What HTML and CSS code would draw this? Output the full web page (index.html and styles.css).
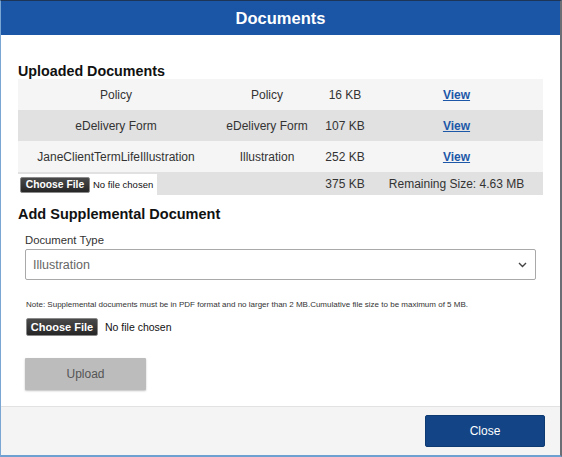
FILE: index.html
```html
<!DOCTYPE html>
<html>
<head>
<meta charset="utf-8">
<link rel="stylesheet" href="styles.css">
</head>
<body>
<div class="modal">
  <div class="modal-header">Documents</div>
  <div class="modal-body">
    <h2 class="section-title">Uploaded Documents</h2>
    <table class="docs">
      <colgroup>
        <col class="c1"><col class="c2"><col class="c3"><col class="c4">
      </colgroup>
      <tr class="odd"><td>Policy</td><td>Policy</td><td>16 KB</td><td><a class="view" href="#">View</a></td></tr>
      <tr class="even"><td>eDelivery Form</td><td>eDelivery Form</td><td>107 KB</td><td><a class="view" href="#">View</a></td></tr>
      <tr class="odd"><td>JaneClientTermLifeIllustration</td><td>Illustration</td><td>252 KB</td><td><a class="view" href="#">View</a></td></tr>
      <tr class="even total"><td class="file-cell"><div class="file-box small"><span class="file-btn">Choose File</span><span class="file-name">No file chosen</span></div></td><td></td><td>375 KB</td><td>Remaining Size: 4.63 MB</td></tr>
    </table>
    <h2 class="section-title second">Add Supplemental Document</h2>
    <label class="field-label">Document Type</label>
    <div class="select">
      <span>Illustration</span>
      <svg class="chev" width="9" height="6" viewBox="0 0 9 6"><path d="M1 1 L4.5 4.5 L8 1" fill="none" stroke="#444" stroke-width="1.4"/></svg>
    </div>
    <p class="note">Note: Supplemental documents must be in PDF format and no larger than 2 MB.Cumulative file size to be maximum of 5 MB.</p>
    <div class="file-box big"><span class="file-btn">Choose File</span><span class="file-name">No file chosen</span></div>
    <button class="upload">Upload</button>
  </div>
  <div class="modal-footer">
    <button class="close">Close</button>
  </div>
</div>
</body>
</html>
```
FILE: styles.css
```css
* { box-sizing: border-box; }
html, body { margin: 0; padding: 0; background: #fff; }
body { font-family: "Liberation Sans", Arial, sans-serif; color: #222; }

.modal {
  width: 562px;
  height: 457px;
  display: flex;
  flex-direction: column;
  border-top: 1px solid #1d3557;
  border-left: 1px solid #7aa6d4;
  border-right: 2px solid #6b6f75;
  border-bottom: 2px solid #6fa0d2;
  background: #fff;
}

.modal-header {
  height: 34px;
  flex: none;
  background: #1b55a5;
  color: #fff;
  font-weight: bold;
  font-size: 16.5px;
  display: flex;
  align-items: center;
  justify-content: center;
}

.modal-body {
  flex: 1;
  padding: 28px 18px 0 17px;
}

.section-title {
  margin: 0;
  font-size: 14.3px;
  line-height: 16px;
  font-weight: bold;
  color: #111;
}
.section-title.second { margin-top: 11px; font-size: 14.5px; }

.docs {
  width: 525px;
  border-collapse: collapse;
  table-layout: fixed;
  font-size: 12px;
  color: #333;
}
.docs col.c1 { width: 196px; }
.docs col.c2 { width: 106px; }
.docs col.c3 { width: 50px; }
.docs col.c4 { width: 173px; }
.docs td { text-align: center; height: 31px; padding: 0; white-space: nowrap; }
.docs tr.odd { background: #f5f5f5; }
.docs tr.even { background: #e1e1e1; }
.docs tr.total td { height: 23px; }
.docs td.file-cell { text-align: left; padding: 0; vertical-align: bottom; }

.view { color: #1d58a8; font-weight: bold; text-decoration: underline; }

.file-box { display: flex; align-items: center; background: #fff; }
.file-box.small { width: 139px; height: 21px; padding-left: 2px; gap: 3px; font-size: 9.5px; }
.file-box.big { background: transparent; margin-top: 8px; margin-left: 8px; gap: 7px; font-size: 10.5px; }

.file-btn {
  display: inline-flex;
  align-items: center;
  justify-content: center;
  background: linear-gradient(#4a4a4a, #262626);
  color: #fff;
  font-weight: bold;
  border: 1px solid #8a8a8a;
  border-radius: 2px;
}
.small .file-btn { width: 70px; height: 16px; font-size: 10.3px; }
.big .file-btn { width: 72px; height: 18px; font-size: 11px; }
.file-name { color: #111; }

.field-label {
  display: block;
  margin: 11px 0 0 7px;
  font-size: 11.3px;
  line-height: 14px;
  color: #333;
}

.select {
  margin: 2px 0 0 7px;
  width: 511px;
  height: 31px;
  border: 1px solid #a9a9a9;
  border-radius: 2px;
  display: flex;
  align-items: center;
  justify-content: space-between;
  padding: 0 8px 0 7px;
  font-size: 12.5px;
  color: #666;
}
.chev { margin-top: 1px; }

.note {
  margin: 20px 0 0 8px;
  font-size: 8px;
  line-height: 10px;
  color: #333;
}

.upload {
  display: block;
  margin: 22px 0 0 7px;
  width: 121px;
  height: 32px;
  background: #bcbcbc;
  border: none;
  border-radius: 1px;
  box-shadow: 0 1px 2px rgba(0,0,0,0.25);
  font-family: "Liberation Sans", Arial, sans-serif;
  font-size: 12px;
  color: #555;
}

.modal-footer {
  flex: none;
  height: 49px;
  border-top: 1px solid #e2e2e2;
  background: #f4f4f4;
  display: flex;
  justify-content: flex-end;
  align-items: flex-start;
  padding: 8px 15px 0 0;
}

.close {
  width: 120px;
  height: 32px;
  background: #134586;
  color: #fff;
  border: 1px solid #0e3a72;
  border-radius: 2px;
  font-family: "Liberation Sans", Arial, sans-serif;
  font-size: 12px;
}
```
